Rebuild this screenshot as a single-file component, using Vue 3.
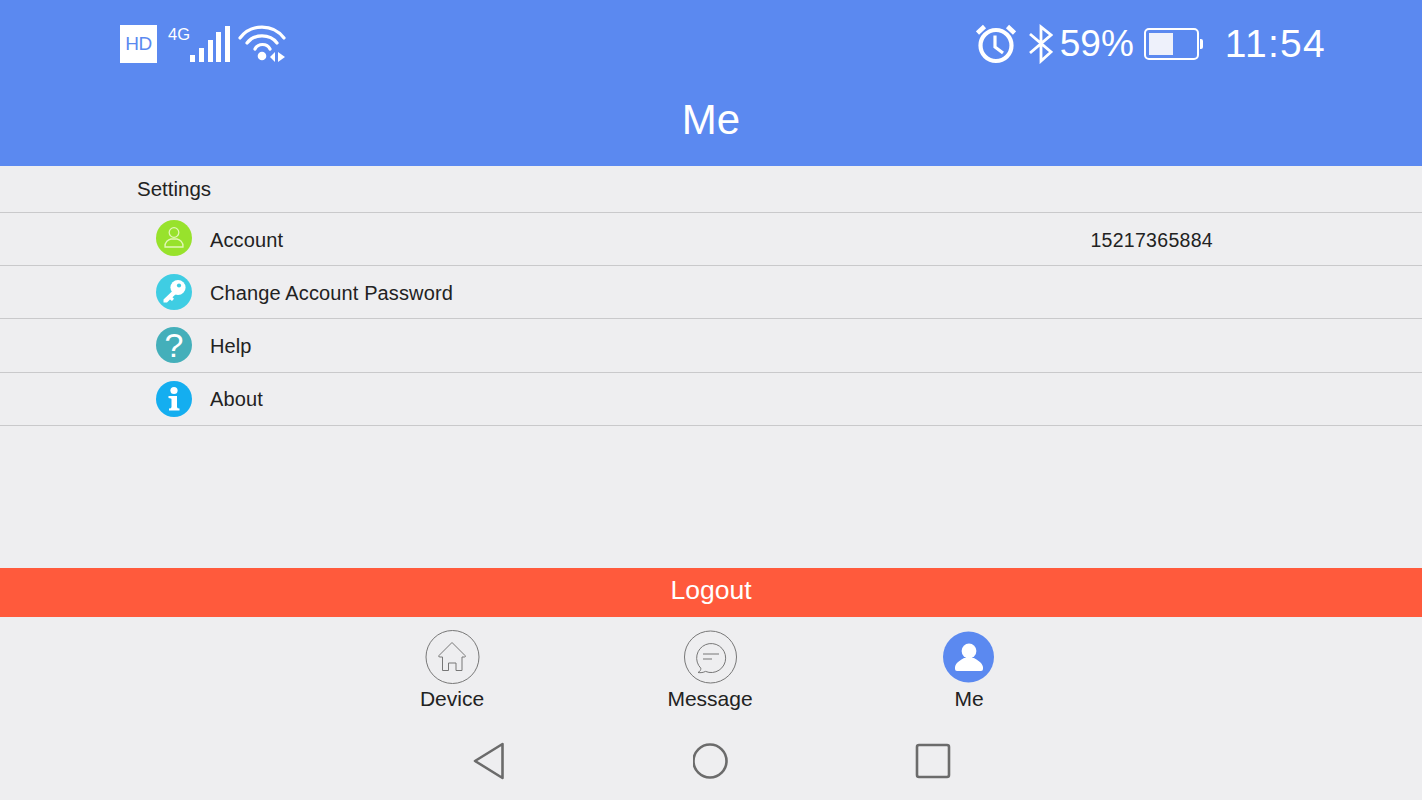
<template>
  <div class="page">
    <header class="header">
      <div class="status">
        <div class="status-left">
          <span class="hd">HD</span>
          <span class="net">4G</span>
          <svg class="signal" width="40" height="36" viewBox="0 0 40 36">
            <rect v-for="bar in signalBars" :key="bar.x" :x="bar.x" :y="bar.y" width="5" :height="36 - bar.y" fill="#fff" />
          </svg>
          <svg class="wifi" width="48" height="38" viewBox="0 0 48 38" fill="none" stroke="#fff" stroke-width="3.2">
            <path d="M2 13 C 13 -1.5, 35 -1.5, 46 13" stroke-linecap="round" />
            <path d="M9 18 C 16 8.5, 32 8.5, 39 18" stroke-linecap="round" />
            <path d="M17 24 C 20 18, 29 18, 32 24" stroke-linecap="round" />
            <circle cx="24" cy="31" r="4.3" fill="#fff" stroke="none" />
            <path d="M37 27 L37 37 L32 32 Z" fill="#fff" stroke="none" />
            <path d="M40 27 L40 37 L47 32 Z" fill="#fff" stroke="none" />
          </svg>
        </div>
        <div class="status-right">
          <svg width="40" height="40" viewBox="0 0 40 40" fill="none" stroke="#fff">
            <circle cx="20" cy="21.5" r="15.5" stroke-width="4.2" />
            <path d="M19 11.5 V23 L27 29" stroke-width="3.2" />
            <path d="M1.5 9 L8.5 2.5 M31.5 2.5 L38.5 9" stroke-width="4.6" />
          </svg>
          <svg class="bt" width="24" height="40" viewBox="0 0 24 40" fill="none" stroke="#fff" stroke-width="2.8">
            <path d="M1 10 L22 28 L12 37 V3 L22 11 L1 29" />
          </svg>
          <span class="percent">59%</span>
          <div class="battery">
            <div class="battery-fill"></div>
          </div>
          <span class="time">11:54</span>
        </div>
      </div>
      <h1 class="title">Me</h1>
    </header>

    <main class="content">
      <div class="section-title">Settings</div>
      <div v-for="item in menu" :key="item.label" class="row">
        <span class="row-icon" :class="item.cls">
          <svg v-if="item.cls === 'green'" width="36" height="36" viewBox="0 0 36 36" fill="none" stroke="#e2f7b8" stroke-width="1.3">
            <circle cx="18" cy="12.5" r="4.8" />
            <path d="M9 27 C 8.5 22, 12.5 19.5, 15 19 H21 C 23.5 19.5, 27.5 22, 27 27 Z" />
          </svg>
          <svg v-else-if="item.cls === 'cyan'" width="36" height="36" viewBox="0 0 36 36">
            <circle cx="22" cy="13.5" r="7.6" fill="#fff" />
            <path d="M18 15.5 L7.5 25.5 V28.5 H11 L14 25.5 L16 27 L18 24.8 L16.5 23.3 L22 18 Z" fill="#fff" />
            <circle cx="23" cy="11.5" r="2.1" fill="#3fcde3" />
          </svg>
          <span v-else-if="item.cls === 'teal'" class="glyph">?</span>
          <svg v-else width="36" height="36" viewBox="0 0 36 36" fill="#fff">
            <circle cx="18" cy="9.5" r="3.6" />
            <path d="M12.5 15 H21 V26 Q21 27.5 23.5 27.5 V29.5 H13 V27.5 Q15.5 27.5 15.5 26 V18.5 Q15.5 17 12.5 17 Z" />
          </svg>
        </span>
        <span class="row-label">{{ item.label }}</span>
        <span v-if="item.value" class="row-value">{{ item.value }}</span>
      </div>
    </main>

    <button type="button" class="logout">Logout</button>

    <nav class="tabs">
      <div class="tab">
        <svg width="56" height="56" viewBox="0 0 56 56" fill="none" stroke="#777" stroke-width="1">
          <circle cx="28.5" cy="28" r="26.5" />
          <path d="M28 13.5 L15 26.5 Q14 28 16 28 H18.5 V41.5 H24.5 V34 H32 V41.5 H38 V28 H40.5 Q42 28 41 26.5 Z" stroke-linejoin="round" />
        </svg>
        <span class="tab-label">Device</span>
      </div>
      <div class="tab">
        <svg width="56" height="56" viewBox="0 0 56 56" fill="none" stroke="#777" stroke-width="1">
          <circle cx="28.5" cy="28" r="26" />
          <path d="M18.8 39.2 A14.5 14.5 0 1 1 23.5 42.4 C 21.5 43.5, 18.5 44, 16 43.5 C 18 42.5, 19 41, 18.8 39.2 Z" stroke-linejoin="round" />
          <path d="M21 25 H37 M21 30 H30" stroke-width="1.2" />
        </svg>
        <span class="tab-label">Message</span>
      </div>
      <div class="tab tab-active">
        <svg width="56" height="56" viewBox="0 0 56 56">
          <circle cx="27.5" cy="28" r="25.5" fill="#5b89f0" />
          <circle cx="28" cy="22" r="7.4" fill="#fff" />
          <path d="M14 38 C 15 33, 20 31, 23 29 H33 C 36 31, 41 33, 42 38 V40 Q 42 42, 40 42 H16 Q 14 42, 14 40 Z" fill="#fff" />
        </svg>
        <span class="tab-label">Me</span>
      </div>
    </nav>

    <div class="system-nav">
      <div class="sys-btn">
        <svg width="36" height="38" viewBox="0 0 36 38" fill="none" stroke="#6b6b6b" stroke-width="2.6" stroke-linejoin="round">
          <path d="M4 19 L31.5 2 V36 Z" />
        </svg>
      </div>
      <div class="sys-btn">
        <svg width="36" height="38" viewBox="0 0 36 38" fill="none" stroke="#6b6b6b" stroke-width="2.6">
          <circle cx="17" cy="19" r="16.5" />
        </svg>
      </div>
      <div class="sys-btn">
        <svg width="36" height="38" viewBox="0 0 36 38" fill="none" stroke="#6b6b6b" stroke-width="2.6" stroke-linejoin="round">
          <rect x="2" y="3" width="32" height="32" rx="2" />
        </svg>
      </div>
    </div>
  </div>
</template>

<script setup>
const signalBars = [
  { x: 0, y: 29 },
  { x: 9, y: 22 },
  { x: 18, y: 14 },
  { x: 26, y: 6 },
  { x: 35, y: 0 },
];

const menu = [
  { label: "Account", value: "15217365884", cls: "green" },
  { label: "Change Account Password", cls: "cyan" },
  { label: "Help", cls: "teal" },
  { label: "About", cls: "blue" },
];
</script>

<style>
html,
body {
  margin: 0;
  background: #eeeef0;
}
</style>

<style scoped>
.page {
  display: flex;
  flex-direction: column;
  height: 800px;
  background: #eeeef0;
  font-family: "Liberation Sans", Arial, sans-serif;
  color: #222;
  overflow: hidden;
}

.header {
  height: 166px;
  background: #5b89f0;
  color: #fff;
  flex: none;
}

.status {
  display: flex;
  justify-content: space-between;
  align-items: center;
  height: 88px;
  padding: 0 96px 0 120px;
}

.status-left,
.status-right {
  display: flex;
  align-items: center;
}

.hd {
  display: flex;
  align-items: center;
  justify-content: center;
  width: 37px;
  height: 38px;
  background: #fff;
  color: #5b89f0;
  font-size: 19px;
  letter-spacing: -0.4px;
}

.net {
  align-self: flex-start;
  margin: 0 0 0 11px;
  font-size: 16.5px;
  width: 22px;
}

.wifi {
  margin-left: 8px;
}

.bt {
  margin-left: 13px;
}

.percent {
  margin-left: 7px;
  font-size: 37px;
  line-height: 40px;
}

.battery {
  position: relative;
  box-sizing: border-box;
  width: 55px;
  height: 32px;
  margin-left: 10px;
  padding: 3px;
  border: 2px solid #fff;
  border-radius: 5px;
}

.battery::after {
  content: "";
  position: absolute;
  right: -6px;
  top: 9px;
  width: 3px;
  height: 10px;
  background: #fff;
  border-radius: 0 2px 2px 0;
}

.battery-fill {
  width: 24px;
  height: 100%;
  background: #eef1fb;
}

.time {
  margin-left: 26px;
  font-size: 39px;
  line-height: 40px;
  letter-spacing: 1.3px;
}

.title {
  margin: 8px 0 0;
  text-align: center;
  font-size: 42px;
  line-height: 48px;
  font-weight: 400;
}

.content {
  flex: 1;
}

.section-title {
  box-sizing: border-box;
  height: 47px;
  padding: 11px 0 0 137px;
  font-size: 20.5px;
  line-height: 24px;
  border-bottom: 1px solid #c9c9cb;
}

.row {
  display: flex;
  align-items: center;
  box-sizing: border-box;
  height: 53.2px;
  padding-left: 156px;
  border-bottom: 1px solid #c9c9cb;
  font-size: 20px;
}

.row-icon {
  display: flex;
  align-items: center;
  justify-content: center;
  width: 36px;
  height: 36px;
  border-radius: 50%;
  flex: none;
}

.green {
  background: #98e22c;
  margin-top: -2px;
}

.cyan {
  background: #3fcde3;
}

.teal {
  background: #44afba;
}

.blue {
  background: #14aef0;
}

.glyph {
  color: #fff;
  font-size: 34px;
  line-height: 36px;
}

.row-label {
  margin: 2px 0 0 18px;
  letter-spacing: 0.12px;
}

.row-value {
  margin: 2px 209px 0 auto;
  font-size: 19.5px;
  letter-spacing: 0.3px;
}

.logout {
  display: block;
  flex: none;
  width: 100%;
  height: 49px;
  border: 0;
  padding: 0 0 4px;
  background: #ff5a3c;
  color: #fff;
  font-family: inherit;
  font-size: 26.5px;
}

.tabs {
  display: flex;
  justify-content: center;
  flex: none;
  height: 105px;
  padding: 12px 1px 0 0;
  box-sizing: border-box;
}

.tab {
  display: flex;
  flex-direction: column;
  align-items: center;
  width: 258px;
}

.tab-active {
  margin-left: 1px;
}

.tab-label {
  font-size: 21px;
  line-height: 26px;
  margin-top: 1px;
}

.system-nav {
  display: flex;
  justify-content: center;
  flex: none;
  height: 78px;
  padding-top: 20px;
  box-sizing: border-box;
}

.sys-btn {
  display: flex;
  justify-content: center;
  width: 222px;
}
</style>
